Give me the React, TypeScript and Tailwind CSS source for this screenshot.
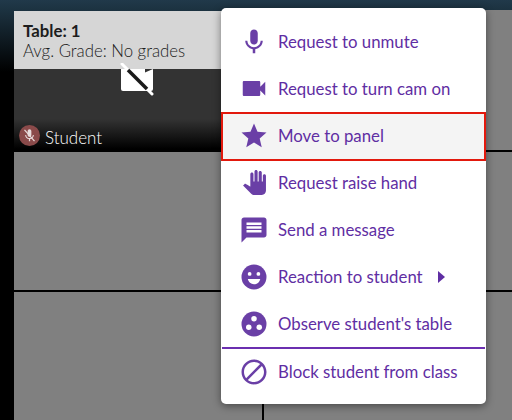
import type { ReactNode } from 'react'

const Icon = ({ size = 30, children }: { size?: number; children: ReactNode }) => (
  <div className="flex w-[30px] shrink-0 items-center justify-center">
    <svg width={size} height={size} viewBox="0 0 24 24" fill="#6a3fa6">
      {children}
    </svg>
  </div>
)

const items: { label: string; size?: number; path?: string; extra?: ReactNode; highlighted?: boolean; arrow?: boolean }[] = [
  {
    label: 'Request to unmute',
    path: 'M12 14c1.66 0 2.99-1.34 2.99-3L15 5c0-1.66-1.34-3-3-3S9 3.34 9 5v6c0 1.66 1.34 3 3 3zm5.3-3c0 3-2.54 5.1-5.3 5.1S6.7 14 6.7 11H5c0 3.41 2.72 6.23 6 6.72V21h2v-3.28c3.28-.48 6-3.3 6-6.72h-1.7z',
  },
  {
    label: 'Request to turn cam on',
    size: 31,
    path: 'M17 10.5V7c0-.55-.45-1-1-1H4c-.55 0-1 .45-1 1v10c0 .55.45 1 1 1h12c.55 0 1-.45 1-1v-3.5l4 4v-11l-4 4z',
  },
  {
    label: 'Move to panel',
    highlighted: true,
    path: 'M12 17.27L18.18 21l-1.64-7.03L22 9.24l-7.19-.61L12 2 9.19 8.63 2 9.24l5.46 4.73L5.82 21z',
  },
  {
    label: 'Request raise hand',
    size: 25,
    path: 'M23 5.5V20c0 2.2-1.8 4-4 4h-7.3c-1.08 0-2.1-.43-2.85-1.19L1 14.83s1.26-1.23 1.3-1.25c.22-.19.49-.29.79-.29.22 0 .42.06.6.16.04.01 4.31 2.46 4.31 2.46V4c0-.83.67-1.5 1.5-1.5S11 3.17 11 4v7h1V1.5c0-.83.67-1.5 1.5-1.5S15 .67 15 1.5V11h1V2.5c0-.83.67-1.5 1.5-1.5s1.5.67 1.5 1.5V11h1V5.5c0-.83.67-1.5 1.5-1.5s1.5.67 1.5 1.5z',
  },
  {
    label: 'Send a message',
    path: 'M20 2H4c-1.1 0-1.99.9-1.99 2L2 22l4-4h14c1.1 0 2-.9 2-2V4c0-1.1-.9-2-2-2zm-2 12H6v-2h12v2zm0-3H6V9h12v2zm0-3H6V6h12v2z',
  },
  {
    label: 'Reaction to student',
    arrow: true,
    extra: (
      <>
        <circle cx="12" cy="12" r="10" />
        <circle cx="8.5" cy="9.5" r="1.5" fill="#fff" />
        <circle cx="15.5" cy="9.5" r="1.5" fill="#fff" />
        <path d="M7 13.5h10c-.6 2.6-2.6 4.3-5 4.3s-4.4-1.7-5-4.3z" fill="#fff" />
      </>
    ),
  },
  {
    label: "Observe student's table",
    extra: (
      <>
        <circle cx="12" cy="12" r="10" />
        <circle cx="12" cy="7.8" r="2.2" fill="#fff" />
        <circle cx="7.8" cy="14.6" r="2.2" fill="#fff" />
        <circle cx="16.2" cy="14.6" r="2.2" fill="#fff" />
      </>
    ),
  },
]

const MenuRow = ({ item }: { item: (typeof items)[number] }) => (
  <div
    className={`flex items-center gap-[9px] ${
      item.highlighted
        ? 'relative z-10 -mb-[2px] h-[49px] border-[2px] border-[#e2190d] bg-[#f4f4f4] pl-[16px] pb-[1px]'
        : 'h-[47px] pl-[18px]'
    }`}
  >
    <Icon size={item.size}>{item.path ? <path d={item.path} /> : item.extra}</Icon>
    <span className="text-[16.8px] text-[#5f2ea3]">{item.label}</span>
    {item.arrow && <div className="ml-[6px] h-0 w-0 border-y-[6px] border-l-[7px] border-y-transparent border-l-[#5f2ea3]" />}
  </div>
)

export default function App() {
  return (
    <div className="relative h-[420px] w-[512px] overflow-hidden bg-[linear-gradient(to_bottom,#21394a_0px,#1c3240_10px,#000_72px)] font-['Lato','Open_Sans',sans-serif]">
      {/* table grid */}
      <div className="ml-[14px] grid h-full grid-cols-[248px_1fr] grid-rows-[139px_138px_1fr] gap-[2px] pt-[11px]">
        <div className="flex flex-col bg-[#333]">
          <div className="h-[58px] bg-[#d6d6d6] px-[9px] pt-[10px] leading-[20px] text-[#1d1d1d]">
            <div className="text-[16.8px] font-bold">Table: 1</div>
            <div className="text-[16.8px] font-light">Avg. Grade: No grades</div>
          </div>
          <div className="relative flex-1 bg-[linear-gradient(to_bottom,#333_0px,#333_50px,#000_80px)]">
            <div className="absolute left-[106px] top-[-6px]">
              <svg width="36" height="34" viewBox="0 0 36 34">
                <path d="M1 6h32v20a2 2 0 0 1-2 2H3a2 2 0 0 1-2-2z" fill="#fff" />
                <path d="M25 6h8l-8 3.5z" fill="#333" />
                <path d="M2 1L32 31" stroke="#fff" strokeWidth="3" strokeLinecap="round" />
                <path d="M8 7L27 26" stroke="#1a1a1a" strokeWidth="3.5" />
              </svg>
            </div>
            <div className="absolute bottom-[2px] left-[5px] flex items-start gap-[5px]">
              <div className="flex h-[21px] w-[21px] items-center justify-center rounded-full bg-[#8a4a4a]">
                <svg width="15" height="15" viewBox="0 0 24 24" fill="#e8dcdc">
                  <path d="M12 14c1.66 0 2.99-1.34 2.99-3L15 5c0-1.66-1.34-3-3-3S9 3.34 9 5v6c0 1.66 1.34 3 3 3zm5.3-3c0 3-2.54 5.1-5.3 5.1S6.7 14 6.7 11H5c0 3.41 2.72 6.23 6 6.72V21h2v-3.28c3.28-.48 6-3.3 6-6.72h-1.7z" />
                  <path d="M4 3l16 18" stroke="#e8dcdc" strokeWidth="2" />
                </svg>
              </div>
              <span className="mt-[2px] text-[17px] font-light leading-[21px] text-white">Student</span>
            </div>
          </div>
        </div>
        <div className="-mt-[1px] bg-[#808080]" />
        <div className="bg-[#808080]" />
        <div className="bg-[#808080]" />
        <div className="bg-[#808080]" />
        <div className="bg-[#808080]" />
      </div>

      {/* context menu */}
      <div className="absolute left-[221px] top-[8px] h-[396px] w-[265px] rounded-[5px] bg-white pt-[10px] shadow-[0_2px_8px_rgba(0,0,0,0.45)]">
        {items.map((item) => (
          <MenuRow key={item.label} item={item} />
        ))}
        <div className="mx-[1px] h-[2px] bg-[#6b2fb0]" />
        <div className="flex h-[45px] items-center gap-[9px] pl-[18px]">
          <Icon>
            <path d="M12 2C6.48 2 2 6.48 2 12s4.48 10 10 10 10-4.48 10-10S17.52 2 12 2zM4 12c0-4.42 3.58-8 8-8 1.85 0 3.55.63 4.9 1.69L5.69 16.9C4.63 15.55 4 13.85 4 12zm8 8c-1.85 0-3.55-.63-4.9-1.69L18.31 7.1C19.37 8.45 20 10.15 20 12c0 4.42-3.58 8-8 8z" />
          </Icon>
          <span className="text-[16.8px] text-[#5f2ea3]">Block student from class</span>
        </div>
      </div>
    </div>
  )
}
